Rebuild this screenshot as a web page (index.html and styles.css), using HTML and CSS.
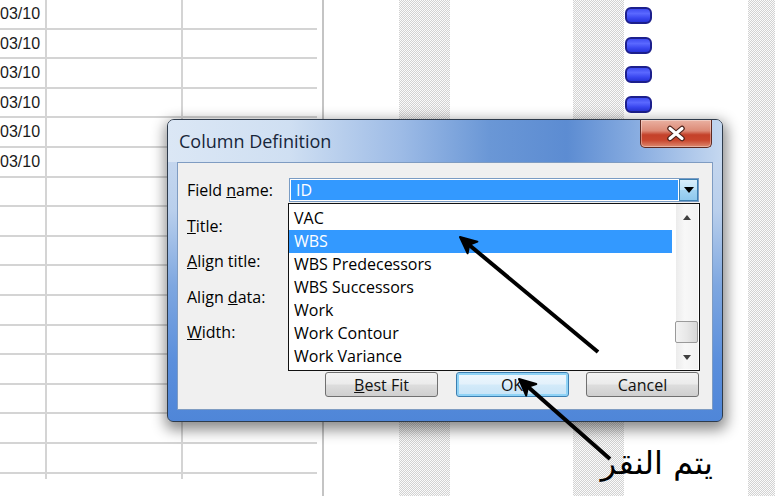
FILE: index.html
```html
<!DOCTYPE html>
<html>
<head>
<meta charset="utf-8">
<link rel="stylesheet" href="styles.css">
</head>
<body>
<div class="screen">
  <div class="table">
    <div class="row"><div class="c date">03/10</div><div class="c mid"></div><div class="c"></div></div>
    <div class="row"><div class="c date">03/10</div><div class="c mid"></div><div class="c"></div></div>
    <div class="row"><div class="c date">03/10</div><div class="c mid"></div><div class="c"></div></div>
    <div class="row"><div class="c date">03/10</div><div class="c mid"></div><div class="c"></div></div>
    <div class="row"><div class="c date">03/10</div><div class="c mid"></div><div class="c"></div></div>
    <div class="row"><div class="c date">03/10</div><div class="c mid"></div><div class="c"></div></div>
    <div class="row"><div class="c date"></div><div class="c mid"></div><div class="c"></div></div>
    <div class="row"><div class="c date"></div><div class="c mid"></div><div class="c"></div></div>
    <div class="row"><div class="c date"></div><div class="c mid"></div><div class="c"></div></div>
    <div class="row"><div class="c date"></div><div class="c mid"></div><div class="c"></div></div>
    <div class="row"><div class="c date"></div><div class="c mid"></div><div class="c"></div></div>
    <div class="row"><div class="c date"></div><div class="c mid"></div><div class="c"></div></div>
    <div class="row"><div class="c date"></div><div class="c mid"></div><div class="c"></div></div>
    <div class="row"><div class="c date"></div><div class="c mid"></div><div class="c"></div></div>
    <div class="row"><div class="c date"></div><div class="c mid"></div><div class="c"></div></div>
    <div class="row"><div class="c date"></div><div class="c mid"></div><div class="c"></div></div>
    <div class="row stub"><div class="c date"></div><div class="c mid"></div><div class="c"></div></div>
  </div>
  <div class="split"></div>
  <div class="gantt">
    <div class="grow"><span class="pill"></span></div>
    <div class="grow"><span class="pill"></span></div>
    <div class="grow"><span class="pill"></span></div>
    <div class="grow"><span class="pill"></span></div>
  </div>
</div>

<div class="dialog">
  <div class="titlebar">
    <span class="title">Column Definition</span>
    <span class="close">
      <svg width="22" height="17" viewBox="0 0 22 17"><path d="M5 3.5 L17 13.5 M17 3.5 L5 13.5" stroke="#4a2019" stroke-width="5.5" stroke-linecap="round"/><path d="M5 3.5 L17 13.5 M17 3.5 L5 13.5" stroke="#ffffff" stroke-width="3.2" stroke-linecap="round"/></svg>
    </span>
  </div>
  <div class="client">
    <div class="fields">
      <div class="labels">
        <div class="lbl">Field <u>n</u>ame:</div>
        <div class="lbl"><u>T</u>itle:</div>
        <div class="lbl"><u>A</u>lign title:</div>
        <div class="lbl">Align <u>d</u>ata:</div>
        <div class="lbl"><u>W</u>idth:</div>
      </div>
      <div class="controls">
        <div class="combo">
          <span class="combo-val">ID</span>
          <span class="combo-btn"><svg width="10" height="6" viewBox="0 0 10 6"><path d="M0 0 H10 L5 6 Z" fill="#000"/></svg></span>
          <div class="list">
            <div class="items">
              <div class="item">VAC</div>
              <div class="item sel">WBS</div>
              <div class="item">WBS Predecessors</div>
              <div class="item">WBS Successors</div>
              <div class="item">Work</div>
              <div class="item">Work Contour</div>
              <div class="item">Work Variance</div>
            </div>
            <div class="sbar">
              <div class="sb-up"><svg width="8" height="5" viewBox="0 0 8 5"><path d="M0 5 L4 0 L8 5 Z" fill="#404040"/></svg></div>
              <div class="sb-track"></div>
              <div class="sb-thumb"></div>
              <div class="sb-down"><svg width="8" height="5" viewBox="0 0 8 5"><path d="M0 0 L8 0 L4 5 Z" fill="#404040"/></svg></div>
            </div>
          </div>
        </div>
      </div>
    </div>
    <div class="buttons">
      <button class="btn"><u>B</u>est Fit</button>
      <button class="btn default">OK</button>
      <button class="btn">Cancel</button>
    </div>
  </div>
</div>

<svg class="arrows" width="775" height="496" viewBox="0 0 775 496">
  <line x1="598" y1="352" x2="468" y2="244" stroke="#000" stroke-width="4"/>
  <polygon points="460,237 467.6,253.3 469.2,244.7 477.4,241.6" fill="#000" stroke="#000" stroke-width="2" stroke-linejoin="round"/>
  <line x1="610" y1="459" x2="527" y2="386" stroke="#000" stroke-width="4"/>
  <polygon points="519,379 526.2,395.5 528,386.9 536.3,384" fill="#000" stroke="#000" stroke-width="2" stroke-linejoin="round"/>
</svg>

<div class="note" dir="rtl" lang="ar">يتم النقر</div>
</body>
</html>
```

FILE: styles.css
```css
* { box-sizing: border-box; margin: 0; padding: 0; }
html, body { width: 775px; height: 496px; overflow: hidden; background: #fff; }
body { position: relative; font-family: "Liberation Sans", Arial, sans-serif; }

.screen { display: flex; height: 496px; }

.table { width: 317px; flex: none; }
.row {
  display: grid;
  grid-template-columns: 47px 136px 134px;
  height: 29.6px;
  border-bottom: 2px solid #d4d4d4;
}
.row.stub { height: 5px; border-bottom: 0; }
.c { height: 100%; }
.date {
  border-right: 2px solid #d4d4d4;
  padding-right: 6px;
  text-align: right;
  font-size: 16px;
  line-height: 28px;
  color: #1a1a1a;
}
.mid { border-right: 2px solid #d4d4d4; }

.split { width: 2px; margin-left: 5px; background: #c4c4c4; flex: none; }

.gantt {
  flex: 1;
  padding-left: 301px;
  background:
    repeating-linear-gradient(90deg, #fff 0 75px, transparent 75px 126px, #fff 126px 174.5px),
    repeating-conic-gradient(#d2d2d2 0 25%, #fbfbfb 0 50%) 0 0 / 2px 2px;
}
.grow { height: 29.6px; padding-top: 7px; }
.pill {
  display: block;
  width: 27px;
  height: 17px;
  border: 2px solid #1c1f8c;
  border-radius: 6px;
  background: linear-gradient(#3f4cf2 0%, #5a68ff 35%, #3a47f0 70%, #2733d8 100%);
}

/* dialog */
.dialog {
  position: absolute;
  left: 167px;
  top: 119px;
  width: 556px;
  height: 303px;
  border: 1px solid #2e3b4b;
  border-radius: 7px 7px 6px 6px;
  padding: 0 9px 11px 9px;
  display: flex;
  flex-direction: column;
  background: linear-gradient(180deg, #cddcf0 0%, #b9cfec 30%, #7ea7e0 55%, #5b8fdc 80%, #4f86d8 100%);
  box-shadow: 1px 5px 14px 3px rgba(0,0,0,0.45);
  font-family: "Open Sans", "Noto Sans", sans-serif;
}
.titlebar {
  height: 42px;
  display: flex;
  align-items: flex-start;
  justify-content: space-between;
  margin: 0 -9px;
  padding: 0 10px 0 11px;
  border-radius: 6px 6px 0 0;
  background: linear-gradient(90deg, #dbe7f5 0%, #cfdff2 22%, #9dbbe6 42%, #6a97d6 58%, #5c8cd2 72%, #86abe0 84%, #c5d8f0 100%);
}
.title {
  padding-top: 9px;
  font-size: 18px;
  line-height: 24px;
  color: #17263a;
}
.close {
  width: 72px;
  height: 28px;
  border: 1px solid #5e2a22;
  border-top: 0;
  border-radius: 0 0 5px 5px;
  display: flex;
  align-items: center;
  justify-content: center;
  background: linear-gradient(180deg, #eab1a2 0%, #dc8a76 40%, #c4412a 55%, #c9472e 75%, #dd8a70 100%);
  box-shadow: inset 0 0 0 1px rgba(255,255,255,0.35);
}

.client {
  flex: 1;
  border: 1px solid #7f9cc2;
  background: #f0f0f0;
  padding: 15px 13px 12px 9px;
  display: flex;
  flex-direction: column;
  font-size: 16px;
  color: #000;
}
.fields { display: grid; grid-template-columns: 102px 1fr; }
.labels { display: flex; flex-direction: column; gap: 11.5px; }
.lbl { height: 24px; line-height: 24px; white-space: nowrap; }

.controls { position: relative; }
.combo {
  position: relative;
  height: 24px;
  border: 1px solid #7a9cc4;
  background: #fff;
  display: flex;
}
.combo-val {
  flex: 1;
  margin: 1px;
  background: #3399ff;
  color: #fff;
  padding-left: 5px;
  line-height: 20px;
}
.combo-btn {
  width: 19px;
  border: 1px solid #3c7fb1;
  background: linear-gradient(180deg, #d9eefb 0%, #bde2f8 50%, #a3d4f3 51%, #8ec8ee 100%);
  display: flex;
  align-items: center;
  justify-content: center;
}

.list {
  position: absolute;
  left: -2px;
  top: 24px;
  width: 412px;
  height: 168px;
  border: 1px solid #111;
  background: #fff;
  display: flex;
  z-index: 2;
}
.items { width: 383px; padding-top: 3px; }
.item { height: 23px; line-height: 23px; padding-left: 5px; white-space: nowrap; }
.item.sel { background: #3399ff; color: #fff; }

.sbar {
  width: 22px;
  margin: 0 1px 1px 4px;
  display: flex;
  flex-direction: column;
  background: linear-gradient(90deg, #ececec, #f8f8f8 40%, #f2f2f2);
}
.sb-up { height: 26px; display: flex; align-items: center; justify-content: center; }
.sb-track { flex: 1; }
.sb-thumb {
  height: 22px;
  margin: 0 0 2px -1px;
  border: 1px solid #9a9a9a;
  border-radius: 2px;
  background: linear-gradient(90deg, #f3f3f3 0%, #e8e8e8 50%, #d6d6d6 100%);
}
.sb-down { height: 24px; display: flex; align-items: center; justify-content: center; }

.buttons {
  margin-top: auto;
  display: flex;
  justify-content: flex-end;
  gap: 17.5px;
}
.btn {
  width: 113px;
  height: 25px;
  border: 1px solid #707070;
  border-radius: 3px;
  background: linear-gradient(180deg, #f3f3f3 0%, #ebebeb 48%, #dddddd 52%, #cfcfcf 100%);
  font-family: "Open Sans", "Noto Sans", sans-serif;
  font-size: 16px;
  line-height: 22px;
  color: #111;
}
.btn.default {
  border-color: #3c7fb1;
  box-shadow: inset 0 0 0 2px #8fd3f6;
  background: linear-gradient(180deg, #eef7fd 0%, #e3f1fb 48%, #d3eaf9 52%, #c6e3f6 100%);
}

.arrows { position: absolute; left: 0; top: 0; pointer-events: none; z-index: 5; }

.note {
  position: absolute;
  right: 62px;
  top: 438px;
  font-family: "DejaVu Sans", sans-serif;
  font-size: 32px;
  line-height: 50px;
  color: #000;
  z-index: 5;
}
```
